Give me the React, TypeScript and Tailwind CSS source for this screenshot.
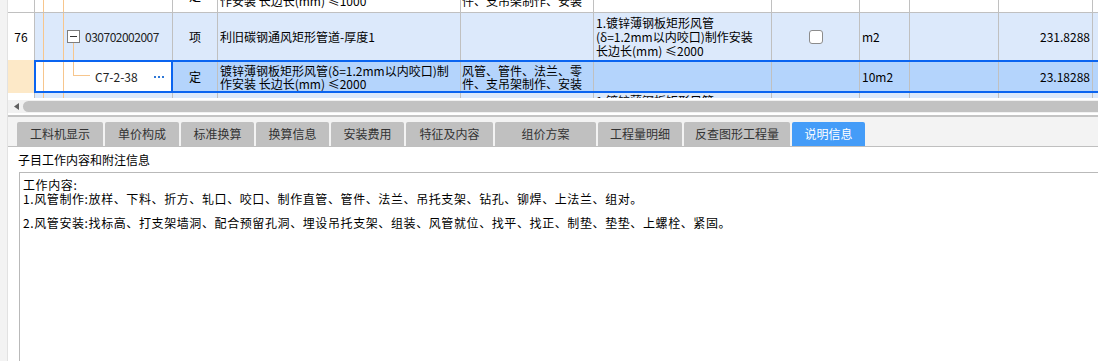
import React from "react";

const bd = "border-r border-[#c0c0c0]";

function Tree({ elbow }: { elbow?: "down" | "up" | "none" }) {
  // orange guide lines of the tree column
  return (
    <>
      <span className="absolute top-0 bottom-0 left-[8px] w-px bg-[#f7c68d]" />
      <span className="absolute top-0 bottom-0 left-[28px] w-px bg-[#f7c68d]" />
      {elbow === "down" && <span className="absolute top-[29px] bottom-0 left-[38px] w-px bg-[#f7c68d]" />}
    </>
  );
}

function Dots() {
  return (
    <span className="ml-auto mr-[7px] flex gap-[2px]">
      <span className="w-[2px] h-[2px] bg-[#2f78d6]" />
      <span className="w-[2px] h-[2px] bg-[#2f78d6]" />
      <span className="w-[2px] h-[2px] bg-[#2f78d6]" />
    </span>
  );
}

function Grid() {
  return (
    <div className="h-[98px] overflow-hidden text-[12px] leading-[14px] text-black">
      {/* row above, mostly scrolled out */}
      <div className="flex h-[13px] border-b border-[#c0c0c0] bg-white overflow-hidden">
        <div className={`w-[27px] shrink-0 ${bd}`} />
        <div className={`relative w-[138px] shrink-0 ${bd}`}>
          <Tree />
        </div>
        <div className={`w-[45px] shrink-0 ${bd} flex justify-center`}>
          <span className="-mt-[11px]">定</span>
        </div>
        <div className={`w-[243px] shrink-0 ${bd} pl-[2px] whitespace-nowrap overflow-hidden`}>
          <div className="-mt-[20px]">
            镀锌薄钢板矩形风管(δ=1.0mm以内咬口)制
            <br />
            作安装 长边长(mm) ≤1000
          </div>
        </div>
        <div className={`w-[133px] shrink-0 ${bd} pl-[1px] whitespace-nowrap overflow-hidden`}>
          <div className="-mt-[20px]">
            风管、管件、法兰、零
            <br />
            件、支吊架制作、安装
          </div>
        </div>
        <div className={`w-[178px] shrink-0 ${bd}`} />
        <div className={`w-[88px] shrink-0 ${bd}`} />
        <div className={`w-[50px] shrink-0 ${bd}`} />
        <div className={`w-[89px] shrink-0 ${bd}`} />
        <div className={`w-[94px] shrink-0 ${bd}`} />
        <div className="flex-1" />
      </div>

      {/* row 76 */}
      <div className="flex h-[47px] bg-[#dce9fb]">
        <div className={`w-[27px] shrink-0 ${bd} bg-white flex items-center justify-center`}>76</div>
        <div className={`relative w-[138px] shrink-0 ${bd} flex items-center pl-[32px]`}>
          <Tree elbow="down" />
          <span className="relative w-[13px] h-[13px] border border-[#7d7d7d] bg-white flex items-center justify-center">
            <span className="w-[7px] h-px bg-[#333]" />
          </span>
          <span className="ml-[5px] text-[#222] tracking-[-0.5px]">030702002007</span>
        </div>
        <div className={`w-[45px] shrink-0 ${bd} flex items-center justify-center`}>项</div>
        <div className={`w-[243px] shrink-0 ${bd} pl-[2px] flex items-center whitespace-nowrap overflow-hidden`}>
          利旧碳钢通风矩形管道-厚度1
        </div>
        <div className={`w-[133px] shrink-0 ${bd}`} />
        <div className={`w-[178px] shrink-0 ${bd} pl-[2px] flex items-center whitespace-nowrap overflow-hidden`}>
          <div>
            1.镀锌薄钢板矩形风管
            <br />
            (δ=1.2mm以内咬口)制作安装
            <br />
            长边长(mm) ≤2000
          </div>
        </div>
        <div className={`w-[88px] shrink-0 ${bd} flex items-center justify-center`}>
          <span className="w-[14px] h-[14px] rounded-[3px] border border-[#8c8c8c] bg-white" />
        </div>
        <div className={`w-[50px] shrink-0 ${bd} pl-[2px] flex items-center`}>m2</div>
        <div className={`w-[89px] shrink-0 ${bd}`} />
        <div className={`w-[94px] shrink-0 ${bd} pr-[2px] flex items-center justify-end`}>231.8288</div>
        <div className="flex-1" />
      </div>

      {/* selected row */}
      <div className="flex h-[33px]">
        <div className="w-[26px] shrink-0 bg-[#fde9c8]" />
        <div className="flex flex-1 border-y-2 border-[#0a64f0] bg-[#b4d4fc]">
          <div className="relative w-[139px] shrink-0 border-x-2 border-[#0a64f0] bg-white flex items-center pl-[59px]">
            <span className="absolute top-0 bottom-0 left-[7px] w-px bg-[#f7c68d]" />
            <span className="absolute top-0 bottom-0 left-[27px] w-px bg-[#f7c68d]" />
            <span className="absolute top-0 h-[13px] left-[37px] w-px bg-[#f7c68d]" />
            <span className="absolute top-[13px] h-px left-[37px] w-[17px] bg-[#f7c68d]" />
            <span className="text-[#222]">C7-2-38</span>
            <Dots />
          </div>
          <div className={`w-[45px] shrink-0 ${bd} flex items-center justify-center`}>定</div>
          <div className={`w-[243px] shrink-0 ${bd} pl-[2px] flex items-center whitespace-nowrap overflow-hidden leading-[13px]`}>
            <div>
              镀锌薄钢板矩形风管(δ=1.2mm以内咬口)制
              <br />
              作安装 长边长(mm) ≤2000
            </div>
          </div>
          <div className={`w-[133px] shrink-0 ${bd} pl-[1px] flex items-center whitespace-nowrap overflow-hidden leading-[13px]`}>
            <div>
              风管、管件、法兰、零
              <br />
              件、支吊架制作、安装
            </div>
          </div>
          <div className={`w-[178px] shrink-0 ${bd}`} />
          <div className={`w-[88px] shrink-0 ${bd}`} />
          <div className={`w-[50px] shrink-0 ${bd} pl-[2px] flex items-center`}>10m2</div>
          <div className={`w-[89px] shrink-0 ${bd}`} />
          <div className={`w-[94px] shrink-0 ${bd} pr-[2px] flex items-center justify-end`}>23.18288</div>
          <div className="flex-1" />
        </div>
      </div>

      {/* next row, cut by the scrollbar */}
      <div className="flex h-[5px] overflow-hidden bg-[#dce9fb]">
        <div className={`w-[27px] shrink-0 ${bd} bg-white`} />
        <div className={`relative w-[138px] shrink-0 ${bd}`}>
          <Tree />
        </div>
        <div className={`w-[45px] shrink-0 ${bd}`} />
        <div className={`w-[243px] shrink-0 ${bd}`} />
        <div className={`w-[133px] shrink-0 ${bd}`} />
        <div className={`w-[178px] shrink-0 ${bd} pl-[2px] pt-[1px] whitespace-nowrap`}>1.镀锌薄钢板矩形风管</div>
        <div className={`w-[88px] shrink-0 ${bd}`} />
        <div className={`w-[50px] shrink-0 ${bd}`} />
        <div className={`w-[89px] shrink-0 ${bd}`} />
        <div className={`w-[94px] shrink-0 ${bd}`} />
        <div className="flex-1" />
      </div>
    </div>
  );
}

function Scrollbar() {
  return (
    <div className="h-[17px] bg-white">
      <div className="mt-[2px] h-[13px] bg-[#f1f1f1] flex items-center">
        <svg width="5" height="7" viewBox="0 0 5 7" className="ml-[6px]">
          <path d="M5 0 L0 3.5 L5 7 Z" fill="#606060" />
        </svg>
        <div className="ml-[4px] flex-1 h-[11px] rounded-l-[6px] bg-[#c2c2c2]" />
      </div>
    </div>
  );
}

const tabs: { label: string; w: string; active?: boolean }[] = [
  { label: "工料机显示", w: "w-[86px]" },
  { label: "单价构成", w: "w-[74px]" },
  { label: "标准换算", w: "w-[73px]" },
  { label: "换算信息", w: "w-[73px]" },
  { label: "安装费用", w: "w-[73px]" },
  { label: "特征及内容", w: "w-[87px]" },
  { label: "组价方案", w: "w-[101px]" },
  { label: "工程量明细", w: "w-[84px]" },
  { label: "反查图形工程量", w: "w-[106px]" },
  { label: "说明信息", w: "w-[73px]", active: true },
];

function Tabs() {
  return (
    <div className="h-[30px] bg-[#f3f3f3] border-b border-[#bfbfbf] flex items-end gap-[2px] pl-[9px]">
      {tabs.map((t) => (
        <div
          key={t.label}
          className={[
            t.w,
            "h-[24px] rounded-t-[2px] flex items-center justify-center text-[12px] whitespace-nowrap",
            t.active ? "bg-[#449cf8] text-white" : "bg-[#c0c0c0] text-[#333]",
          ].join(" ")}
        >
          {t.label}
        </div>
      ))}
    </div>
  );
}

function Info() {
  return (
    <div className="flex-1 flex flex-col bg-white min-h-0">
      <div className="pl-[10px] pt-[5px] text-[12px] leading-[16px] text-black">子目工作内容和附注信息</div>
      <div className="ml-[11px] mt-[4px] flex-1 border-l border-t border-[#b9b9b9] pl-[3px] pt-[5px] text-[12px] leading-[14px] tracking-[0.6px] text-black whitespace-nowrap">
        <div>工作内容:</div>
        <div>1.风管制作:放样、下料、折方、轧口、咬口、制作直管、管件、法兰、吊托支架、钻孔、铆焊、上法兰、组对。</div>
        <div className="h-[10px]" />
        <div>2.风管安装:找标高、打支架墙洞、配合预留孔洞、埋设吊托支架、组装、风管就位、找平、找正、制垫、垫垫、上螺栓、紧固。</div>
      </div>
    </div>
  );
}

export default function App() {
  return (
    <div className="w-[1098px] h-[361px] overflow-hidden flex bg-white font-['Noto_Sans_CJK_SC','Noto_Sans',sans-serif]">
      <div className="w-[8px] shrink-0 bg-[#f3f3f3] border-r border-[#e2e2e2]" />
      <div className="flex-1 flex flex-col min-w-0">
        <Grid />
        <Scrollbar />
        <div className="h-[2px] bg-[#c4c4c4]" />
        <Tabs />
        <Info />
      </div>
    </div>
  );
}
